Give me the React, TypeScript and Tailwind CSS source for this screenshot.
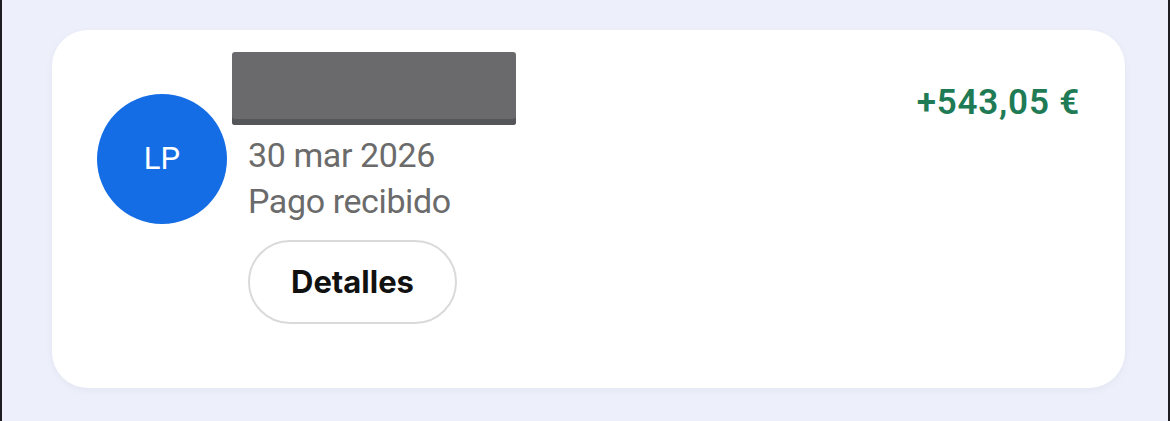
export default function App() {
  return (
    <main className="h-[421px] w-[1170px] overflow-hidden border-x-2 border-[#1d1d22] bg-[#edf0fa] px-[50px] pt-[30px] font-['Roboto',sans-serif]">
      <div className="flex h-[358px] w-[1073px] rounded-[36px] bg-white pl-[45px] pr-[45px] pt-[22px] shadow-[0_2px_6px_rgba(150,160,190,0.12)]">
        <div className="mt-[42px] flex h-[130px] w-[130px] shrink-0 items-center justify-center rounded-full bg-[#156de6] text-[31px] text-white">
          LP
        </div>
        <div className="ml-[5px] flex flex-col">
          <div className="h-[73px] w-[284px] rounded-[3px] bg-[#6a6a6c] shadow-[inset_0_-6px_0_#55565a]" />
          <div className="ml-[16px] mt-[10px] text-[34px] leading-[40px] tracking-[-0.4px] text-[#6b6b6b]">30 mar 2026</div>
          <div className="ml-[16px] mt-[6px] text-[34px] leading-[40px] tracking-[-0.4px] text-[#6b6b6b]">Pago recibido</div>
          <button
            className="ml-[16px] mt-[19px] flex h-[84px] w-[209px] items-center justify-center rounded-full border-2 border-[#dadada] font-['Inter',sans-serif] text-[31px] font-bold text-[#111]"
            type="button"
          >
            Detalles
          </button>
        </div>
        <div className="ml-auto mt-[31px] text-[35px] font-semibold leading-[40px] tracking-[0.8px] text-[#1e7b55]">+543,05 €</div>
      </div>
    </main>
  )
}
